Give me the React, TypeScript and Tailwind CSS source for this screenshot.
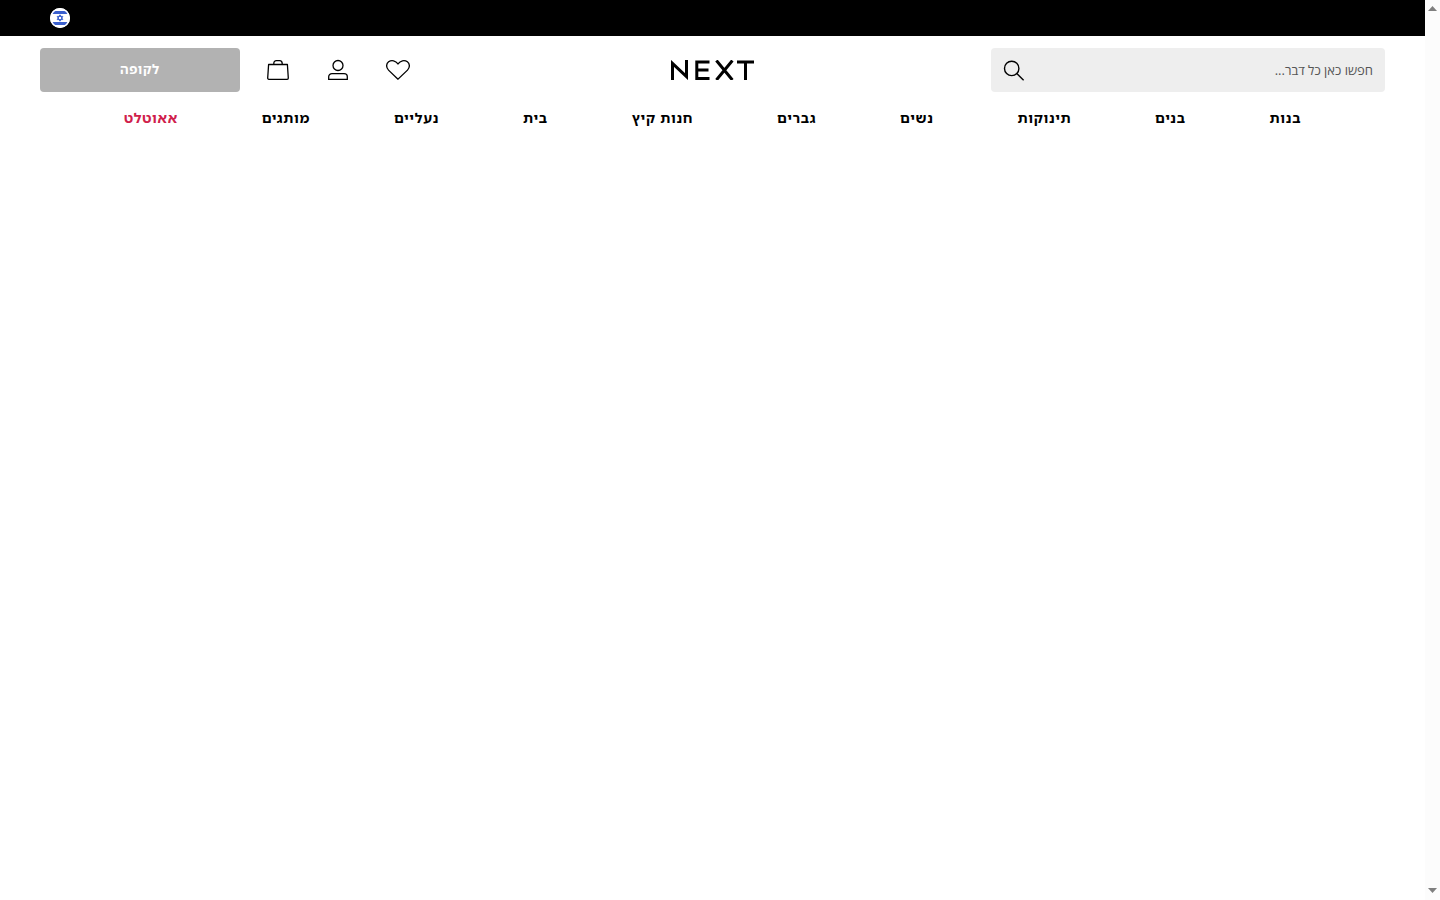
import React from "react";

const categories = [
  { label: "בנות" },
  { label: "בנים" },
  { label: "תינוקות" },
  { label: "נשים" },
  { label: "גברים" },
  { label: "חנות קיץ" },
  { label: "בית" },
  { label: "נעליים" },
  { label: "מותגים" },
  { label: "אאוטלט", sale: true },
];

const FlagIcon = () => (
  <svg viewBox="0 0 20 20" className="w-5 h-5" aria-hidden="true">
    <defs>
      <clipPath id="flag-circle">
        <circle cx="10" cy="10" r="10" />
      </clipPath>
    </defs>
    <g clipPath="url(#flag-circle)">
      <rect width="20" height="20" fill="#fff" />
      <rect x="2" y="3" width="16" height="3" fill="#3a5fcd" />
      <rect x="2" y="14" width="16" height="3" fill="#3a5fcd" />
      <path d="M10 6.8 L12.8 11.6 H7.2 Z M10 13.2 L7.2 8.4 H12.8 Z" fill="none" stroke="#3a5fcd" strokeWidth="1" />
    </g>
    <circle cx="10" cy="10" r="9.3" fill="none" stroke="#fff" strokeWidth="1.4" />
  </svg>
);

const HeartIcon = () => (
  <svg viewBox="0 0 24 24" className="w-6 h-6" fill="none" stroke="currentColor" strokeWidth="1.3" aria-hidden="true">
    <path d="M12 21.2 L2.5 12.1 C-0.2 9.4 0.2 5.6 2.6 3.8 C5.6 1.6 9.6 2.6 12 5.8 C14.4 2.6 18.4 1.6 21.4 3.8 C23.8 5.6 24.2 9.4 21.5 12.1 Z" />
  </svg>
);

const UserIcon = () => (
  <svg viewBox="0 0 24 24" className="w-6 h-6" fill="none" stroke="currentColor" strokeWidth="1.3" aria-hidden="true">
    <circle cx="12" cy="7.5" r="5" />
    <path d="M2.7 21.3 V18.8 C2.7 16.8 4.2 15.7 6 15.7 H18 C19.8 15.7 21.3 16.8 21.3 18.8 V21.3 Z" />
  </svg>
);

const BagIcon = () => (
  <svg viewBox="0 0 24 24" className="w-6 h-6" fill="none" stroke="currentColor" strokeWidth="1.3" strokeLinejoin="round" aria-hidden="true">
    <path d="M2.6 6.5 H21.4 L22.3 20 C22.3 20.8 21.9 21.3 21.2 21.3 H2.8 C2.1 21.3 1.7 20.8 1.7 20 Z" />
    <path d="M7.8 6.3 V5.5 C7.8 3.6 8.8 2.6 10.4 2.6 H13.6 C15.2 2.6 16.2 3.6 16.2 5.5 V6.3" />
  </svg>
);

const SearchIcon = () => (
  <svg viewBox="0 0 24 24" className="w-6 h-6" fill="none" stroke="currentColor" strokeWidth="1.4" aria-hidden="true">
    <circle cx="9.7" cy="10.4" r="7.2" />
    <path d="M14.8 15.5 L21.6 22.3" />
  </svg>
);

const Logo = () => (
  <svg viewBox="0 0 83 20" className="w-[83px] h-5" fill="none" stroke="#000" strokeWidth="3" aria-hidden="true">
    <path d="M1.5 20 V3.4 L15.5 16.6 V0" strokeMiterlimit="10" />
    <path d="M38.5 2 H25.8 V18.5 H38.5 M25.8 10 H37.5" />
    <path d="M45.4 0.5 L61.4 20 M61.4 0.5 L45.4 20" />
    <path d="M66 2 H83 M74.5 2 V20" />
  </svg>
);

const Scrollbar = () => (
  <div className="sticky top-0 h-screen w-[15px] shrink-0 bg-[#fcfcfc] flex flex-col items-center justify-between pt-1.5 pb-[7px]" aria-hidden="true">
    <svg viewBox="0 0 9 5" className="w-[9px] h-[5px]">
      <path d="M0 5 L4.5 0 L9 5 Z" fill="#7f7f7f" />
    </svg>
    <svg viewBox="0 0 9 5" className="w-[9px] h-[5px]">
      <path d="M0 0 L4.5 5 L9 0 Z" fill="#7f7f7f" />
    </svg>
  </div>
);

const Header = () => {
  return (
    <header>
      <div className="bg-black h-9 px-[50px] flex items-center justify-end">
        <button type="button" aria-label="בחירת מדינה">
          <FlagIcon />
        </button>
      </div>

      <div className="px-10 pt-3 grid grid-cols-[1fr_auto_1fr] items-center">
        <form role="search" className="flex items-center w-full max-w-[394px] h-11 bg-[#eee] rounded pr-3 pl-[11px]">
          <input
            type="text"
            aria-label="חיפוש"
            placeholder="חפשו כאן כל דבר..."
            className="flex-1 min-w-0 pt-0.5 bg-transparent outline-none text-[13px] font-['Open_Sans',sans-serif] placeholder:text-[#555]"
          />
          <button type="submit" aria-label="חיפוש">
            <SearchIcon />
          </button>
        </form>

        <a href="#" aria-label="NEXT">
          <Logo />
        </a>

        <div className="flex items-center justify-end">
          <a href="#" aria-label="מועדפים" className="w-[60px] flex justify-center">
            <HeartIcon />
          </a>
          <a href="#" aria-label="החשבון שלי" className="w-[60px] flex justify-center">
            <UserIcon />
          </a>
          <a href="#" aria-label="סל קניות" className="w-[60px] flex justify-center">
            <BagIcon />
          </a>
          <button type="button" className="w-[200px] h-11 mr-2 rounded bg-[#b2b2b2] text-white text-[13px] font-bold tracking-wider">
            לקופה
          </button>
        </div>
      </div>

      <nav className="px-10 pt-4">
        <ul className="flex justify-evenly">
          {categories.map((category) => (
            <li key={category.label} className="flex">
              <a
                href="#"
                className={`text-sm font-bold tracking-wider ${category.sale ? "text-[#d0204b]" : "text-black"}`}
              >
                {category.label}
              </a>
            </li>
          ))}
        </ul>
      </nav>
    </header>
  );
};

const App = () => {
  return (
    <div dir="rtl" className="flex min-h-screen bg-white text-black font-['Noto_Sans_Hebrew','Liberation_Sans',sans-serif]">
      <Scrollbar />
      <div className="flex-1 min-w-0">
        <Header />
      </div>
    </div>
  );
};

export default App;
